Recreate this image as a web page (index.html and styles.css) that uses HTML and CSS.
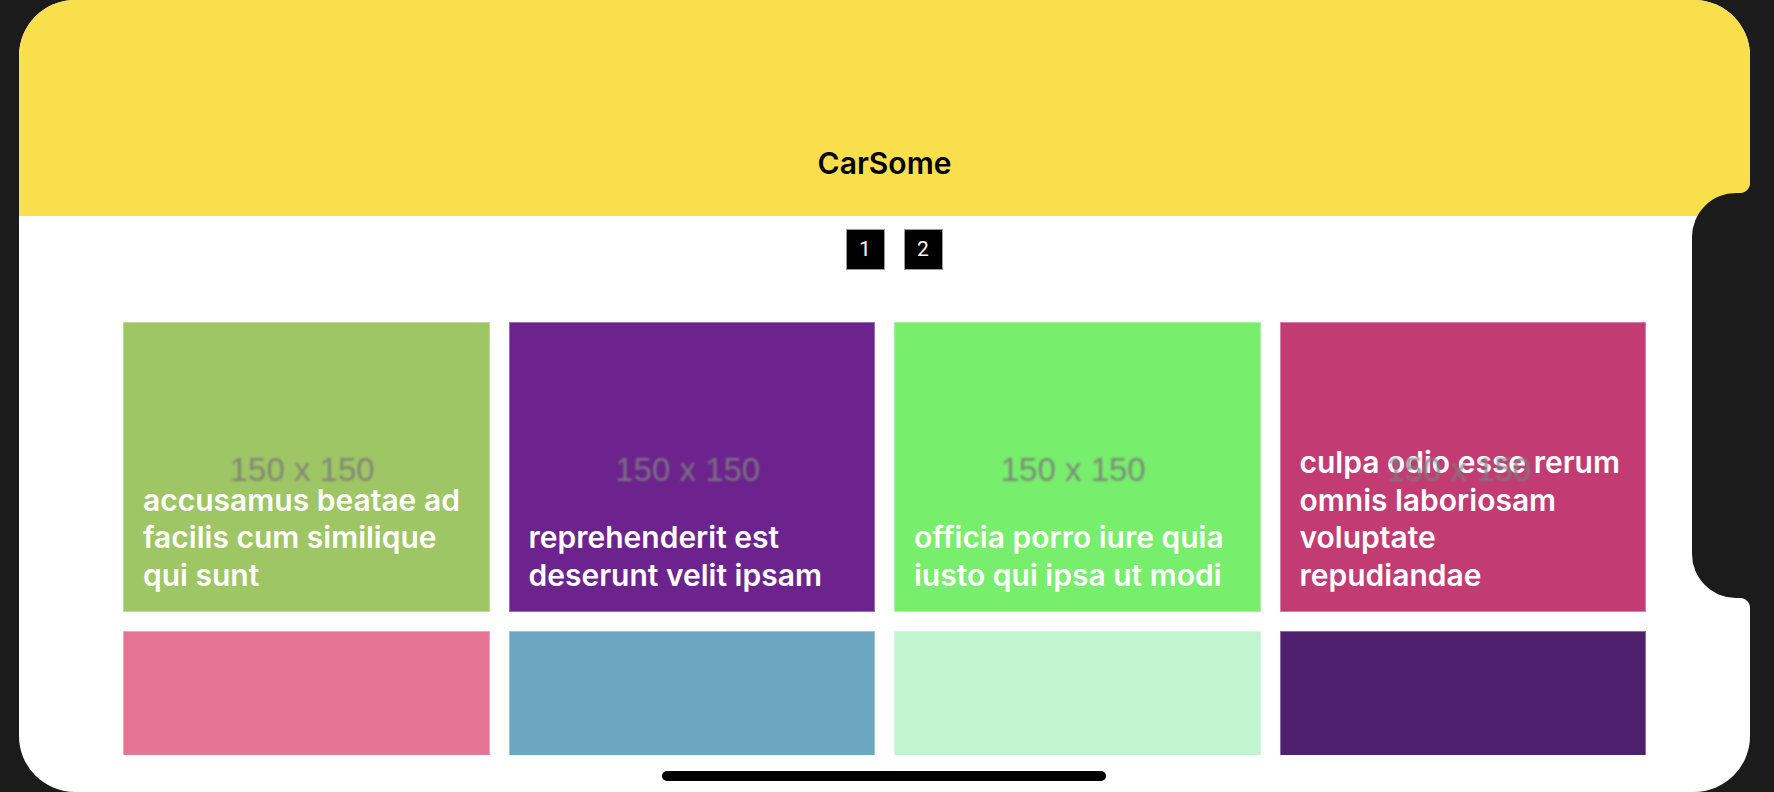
FILE: index.html
```html
<!DOCTYPE html>
<html lang="en">
<head>
<meta charset="utf-8">
<title>CarSome</title>
<link rel="stylesheet" href="styles.css">
</head>
<body>
<div class="device">
  <div class="screen">
    <header class="header"><h1 class="title">CarSome</h1></header>
    <nav class="pager">
      <button class="page">1</button>
      <button class="page">2</button>
    </nav>
    <main class="list">
      <div class="grid">
        <article class="card c1"><span class="ph">150 x 150</span><h2 class="name">accusamus beatae ad facilis cum similique qui sunt</h2></article>
        <article class="card c2"><span class="ph">150 x 150</span><h2 class="name">reprehenderit est deserunt velit ipsam</h2></article>
        <article class="card c3"><span class="ph">150 x 150</span><h2 class="name">officia porro iure quia iusto qui ipsa ut modi</h2></article>
        <article class="card c4"><span class="ph">150 x 150</span><h2 class="name">culpa odio esse rerum omnis laboriosam voluptate repudiandae</h2></article>
        <article class="card c5"></article>
        <article class="card c6"></article>
        <article class="card c7"></article>
        <article class="card c8"></article>
      </div>
    </main>
    <div class="home-indicator"></div>
  </div>
  <div class="notch"></div>
  <div class="fillet fillet-top"></div>
  <div class="fillet fillet-bottom"></div>
</div>
</body>
</html>
```

FILE: styles.css
```css
* { box-sizing: border-box; }
html, body { margin: 0; padding: 0; }
body {
  background: #1b1b1b;
  overflow: hidden;
  width: 1774px;
  height: 792px;
}
.device {
  position: relative;
  width: 1774px;
  height: 792px;
}
.screen {
  position: relative;
  margin-left: 19px;
  width: 1731px;
  height: 792px;
  border-radius: 56px;
  overflow: hidden;
  background: #ffffff;
  display: flex;
  flex-direction: column;
}
.header {
  height: 216px;
  flex: none;
  background: #f9df4b;
  display: flex;
  align-items: flex-end;
  justify-content: center;
  padding-bottom: 35px;
}
.title {
  margin: 0;
  font-family: Inter, "Liberation Sans", sans-serif;
  font-weight: 600;
  font-size: 30px;
  line-height: 36px;
  color: #000;
}
.pager {
  flex: none;
  display: flex;
  justify-content: center;
  gap: 19px;
  padding: 13px 0 0 19px;
}
.page {
  width: 39px;
  height: 41px;
  margin: 0;
  padding: 0;
  background: #000;
  border: 1px solid #9a9a9a;
  color: #fff;
  font-family: Roboto, "Liberation Sans", sans-serif;
  font-size: 21px;
  line-height: 1;
  display: flex;
  align-items: center;
  justify-content: center;
}
.list {
  flex: 1;
  overflow: hidden;
  margin-top: 52px;
  margin-bottom: 37px;
  padding: 0 104px;
}
.grid {
  display: grid;
  grid-template-columns: repeat(4, 1fr);
  grid-auto-rows: 290px;
  gap: 19px;
}
.card {
  display: grid;
  border: 1px solid rgba(255, 255, 255, 0.35);
  overflow: hidden;
}
.ph, .name { grid-area: 1 / 1; }
.ph {
  align-self: center;
  justify-self: center;
  margin: 6px 0 0 -8px;
  font-family: "Liberation Sans", Arial, sans-serif;
  font-size: 33px;
  color: rgba(125, 125, 125, 0.9);
  filter: blur(0.9px);
}
.name {
  align-self: end;
  margin: 0;
  padding: 0 23px 17px 19px;
  font-family: Inter, "Liberation Sans", sans-serif;
  font-weight: 600;
  font-size: 30px;
  line-height: 37.4px;
  color: #fff;
}
.c1 { background: #9fc664; }
.c2 { background: #6c238e; }
.c3 { background: #77ee6c; }
.c4 { background: #c23b73; }
.c5 { background: #e57394; }
.c6 { background: #6ca7c1; }
.c7 { background: #c0f5d0; }
.c8 { background: #4e1f6c; }
.home-indicator {
  position: absolute;
  left: 643px;
  top: 771px;
  width: 444px;
  height: 10px;
  border-radius: 5px;
  background: #000;
}
.notch {
  position: absolute;
  left: 1692px;
  top: 193px;
  width: 82px;
  height: 405px;
  border-radius: 44px 0 0 44px;
  background: #1b1b1b;
}
.fillet {
  position: absolute;
  left: 1740px;
  width: 10px;
  height: 10px;
}
.fillet-top {
  top: 183px;
  background: radial-gradient(circle at 0 0, transparent 9.5px, #1b1b1b 10.5px);
}
.fillet-bottom {
  top: 598px;
  background: radial-gradient(circle at 0 100%, transparent 9.5px, #1b1b1b 10.5px);
}
```
